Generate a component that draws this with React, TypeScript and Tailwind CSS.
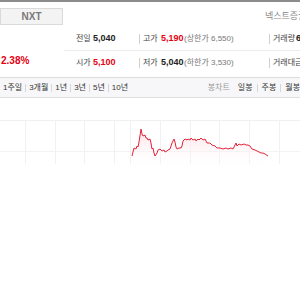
import React from "react";

const font = { fontFamily: '"Liberation Sans", "Noto Sans CJK KR", sans-serif' };

function Sep() {
  return (
    <span className="flex w-[4px] justify-start">
      <span className="block h-[10px] w-px bg-[#d0d0d0]" />
    </span>
  );
}

function TabSep() {
  return <span className="mx-[3px] block h-[8px] w-px bg-[#d6d6d6]" />;
}

function TabSepR() {
  return <span className="mx-[4px] block h-[8px] w-px bg-[#d6d6d6]" />;
}

const linePts: [number, number][] = [
  [132, 58], [134, 50], [136, 51], [137, 48], [138, 49], [139, 44], [141, 31], [142, 36], [143, 38],
  [145, 37], [146, 40], [147, 40], [148, 42], [150, 41], [151, 45], [152, 51], [153, 50], [154, 55],
  [155, 58], [157, 55], [158, 52], [160, 51], [162, 53], [164, 52], [165, 54], [167, 53], [168, 52],
  [170, 51], [171, 48], [172, 45], [173, 43], [174, 41], [175, 44], [176, 49], [177, 51], [179, 50],
  [181, 50], [182, 48], [183, 43], [184, 42], [185, 41], [187, 42], [188, 41], [190, 42], [191, 40],
  [193, 42], [195, 41], [196, 43], [198, 41], [199, 42], [201, 40], [203, 42], [205, 41], [207, 45],
  [210, 45], [212, 47], [215, 48], [217, 50], [220, 50], [223, 51], [226, 50], [228, 51], [231, 50],
  [233, 51], [235, 47], [236, 45], [237, 48], [239, 46], [241, 47], [244, 46], [246, 47], [248, 47],
  [250, 48], [252, 51], [255, 52], [257, 53], [259, 54], [261, 55], [263, 55], [265, 56], [268, 58],
];

function Chart() {
  const d = linePts.map((p, i) => `${i === 0 ? "M" : "L"}${p[0]} ${p[1]}`).join(" ");
  const fill = `${d} L268 70 L132 70 Z`;
  const vx = [25, 55, 84, 114, 130, 160, 190, 219, 249, 279];
  return (
    <svg width="300" height="70" viewBox="0 0 300 70" className="block">
      <defs>
        <linearGradient id="g" x1="0" y1="30" x2="0" y2="70" gradientUnits="userSpaceOnUse">
          <stop offset="0" stopColor="#fbdde2" />
          <stop offset="1" stopColor="#ffffff" stopOpacity="0" />
        </linearGradient>
      </defs>
      <line x1="0" y1="22.5" x2="300" y2="22.5" stroke="#f0f0f0" />
      <line x1="0" y1="53.5" x2="300" y2="53.5" stroke="#f3f3f3" />
      {vx.map((x) => (
        <line key={x} x1={x + 0.5} y1="22" x2={x + 0.5} y2="66" stroke="#f1f1f1" />
      ))}
      <path d={fill} fill="url(#g)" />
      <path d={d} fill="none" stroke="#e3243b" strokeWidth="1" />
    </svg>
  );
}

export default function App() {
  return (
    <div className="h-[300px] w-[300px] overflow-hidden bg-white text-[#222]" style={font}>
      <div className="h-[2px] bg-[#8c8c8c]" />
      <div className="flex h-[75px]">
        <div className="w-[64px] shrink-0">
          <div className="mt-[6px] flex h-[17px] w-[63px] items-center justify-center border border-[#dadada] bg-[#f3f3f3] text-[10px] font-semibold text-[#7a7a7a]">
            NXT
          </div>
          <div className="mt-[30px] pl-[1px] text-[10px] font-bold leading-[12px] text-[#e60012]">2.38%</div>
        </div>
        <div className="flex-1 whitespace-nowrap">
          <div className="flex h-[25px] items-center pl-[201px] text-[9px] text-[#888]">
            <span className="mt-[4px]">넥스트증권</span>
          </div>
          <div className="flex h-[24px] items-center border-b border-[#ececec] pl-[12px] text-[9px]">
            <span className="w-[17px] text-[8px] text-[#444]">전일</span>
            <span className="w-[46px] font-bold">5,040</span>
            <Sep />
            <span className="w-[18px] text-[8px] text-[#444]">고가</span>
            <span className="w-[23px] font-bold text-[#e60012]">5,190</span>
            <span className="w-[85px] text-[8px] text-[#777]">(상한가 6,550)</span>
            <Sep />
            <span className="w-[23px] text-[8px] text-[#444]">거래량</span>
            <span className="font-bold">6</span>
          </div>
          <div className="flex h-[24px] items-center pl-[12px] text-[9px]">
            <span className="w-[17px] text-[8px] text-[#444]">시가</span>
            <span className="w-[46px] font-bold text-[#e60012]">5,100</span>
            <Sep />
            <span className="w-[18px] text-[8px] text-[#444]">저가</span>
            <span className="w-[23px] font-bold">5,040</span>
            <span className="w-[85px] text-[8px] text-[#777]">(하한가 3,530)</span>
            <Sep />
            <span className="text-[8px] text-[#444]">거래대금</span>
          </div>
        </div>
      </div>
      <div className="flex h-[21px] items-center justify-between whitespace-nowrap border-y border-[#dedede] bg-[#f7f7f9] text-[8px] text-[#333]">
        <div className="flex items-center pl-[3px]">
          <span>1주일</span>
          <TabSep />
          <span>3개월</span>
          <TabSep />
          <span>1년</span>
          <TabSep />
          <span>3년</span>
          <TabSep />
          <span>5년</span>
          <TabSep />
          <span>10년</span>
        </div>
        <div className="flex items-center">
          <span className="mr-[8px] text-[#999]">봉차트</span>
          <span>일봉</span>
          <TabSepR />
          <span>주봉</span>
          <TabSepR />
          <span>월봉</span>
        </div>
      </div>
      <Chart />
    </div>
  );
}
